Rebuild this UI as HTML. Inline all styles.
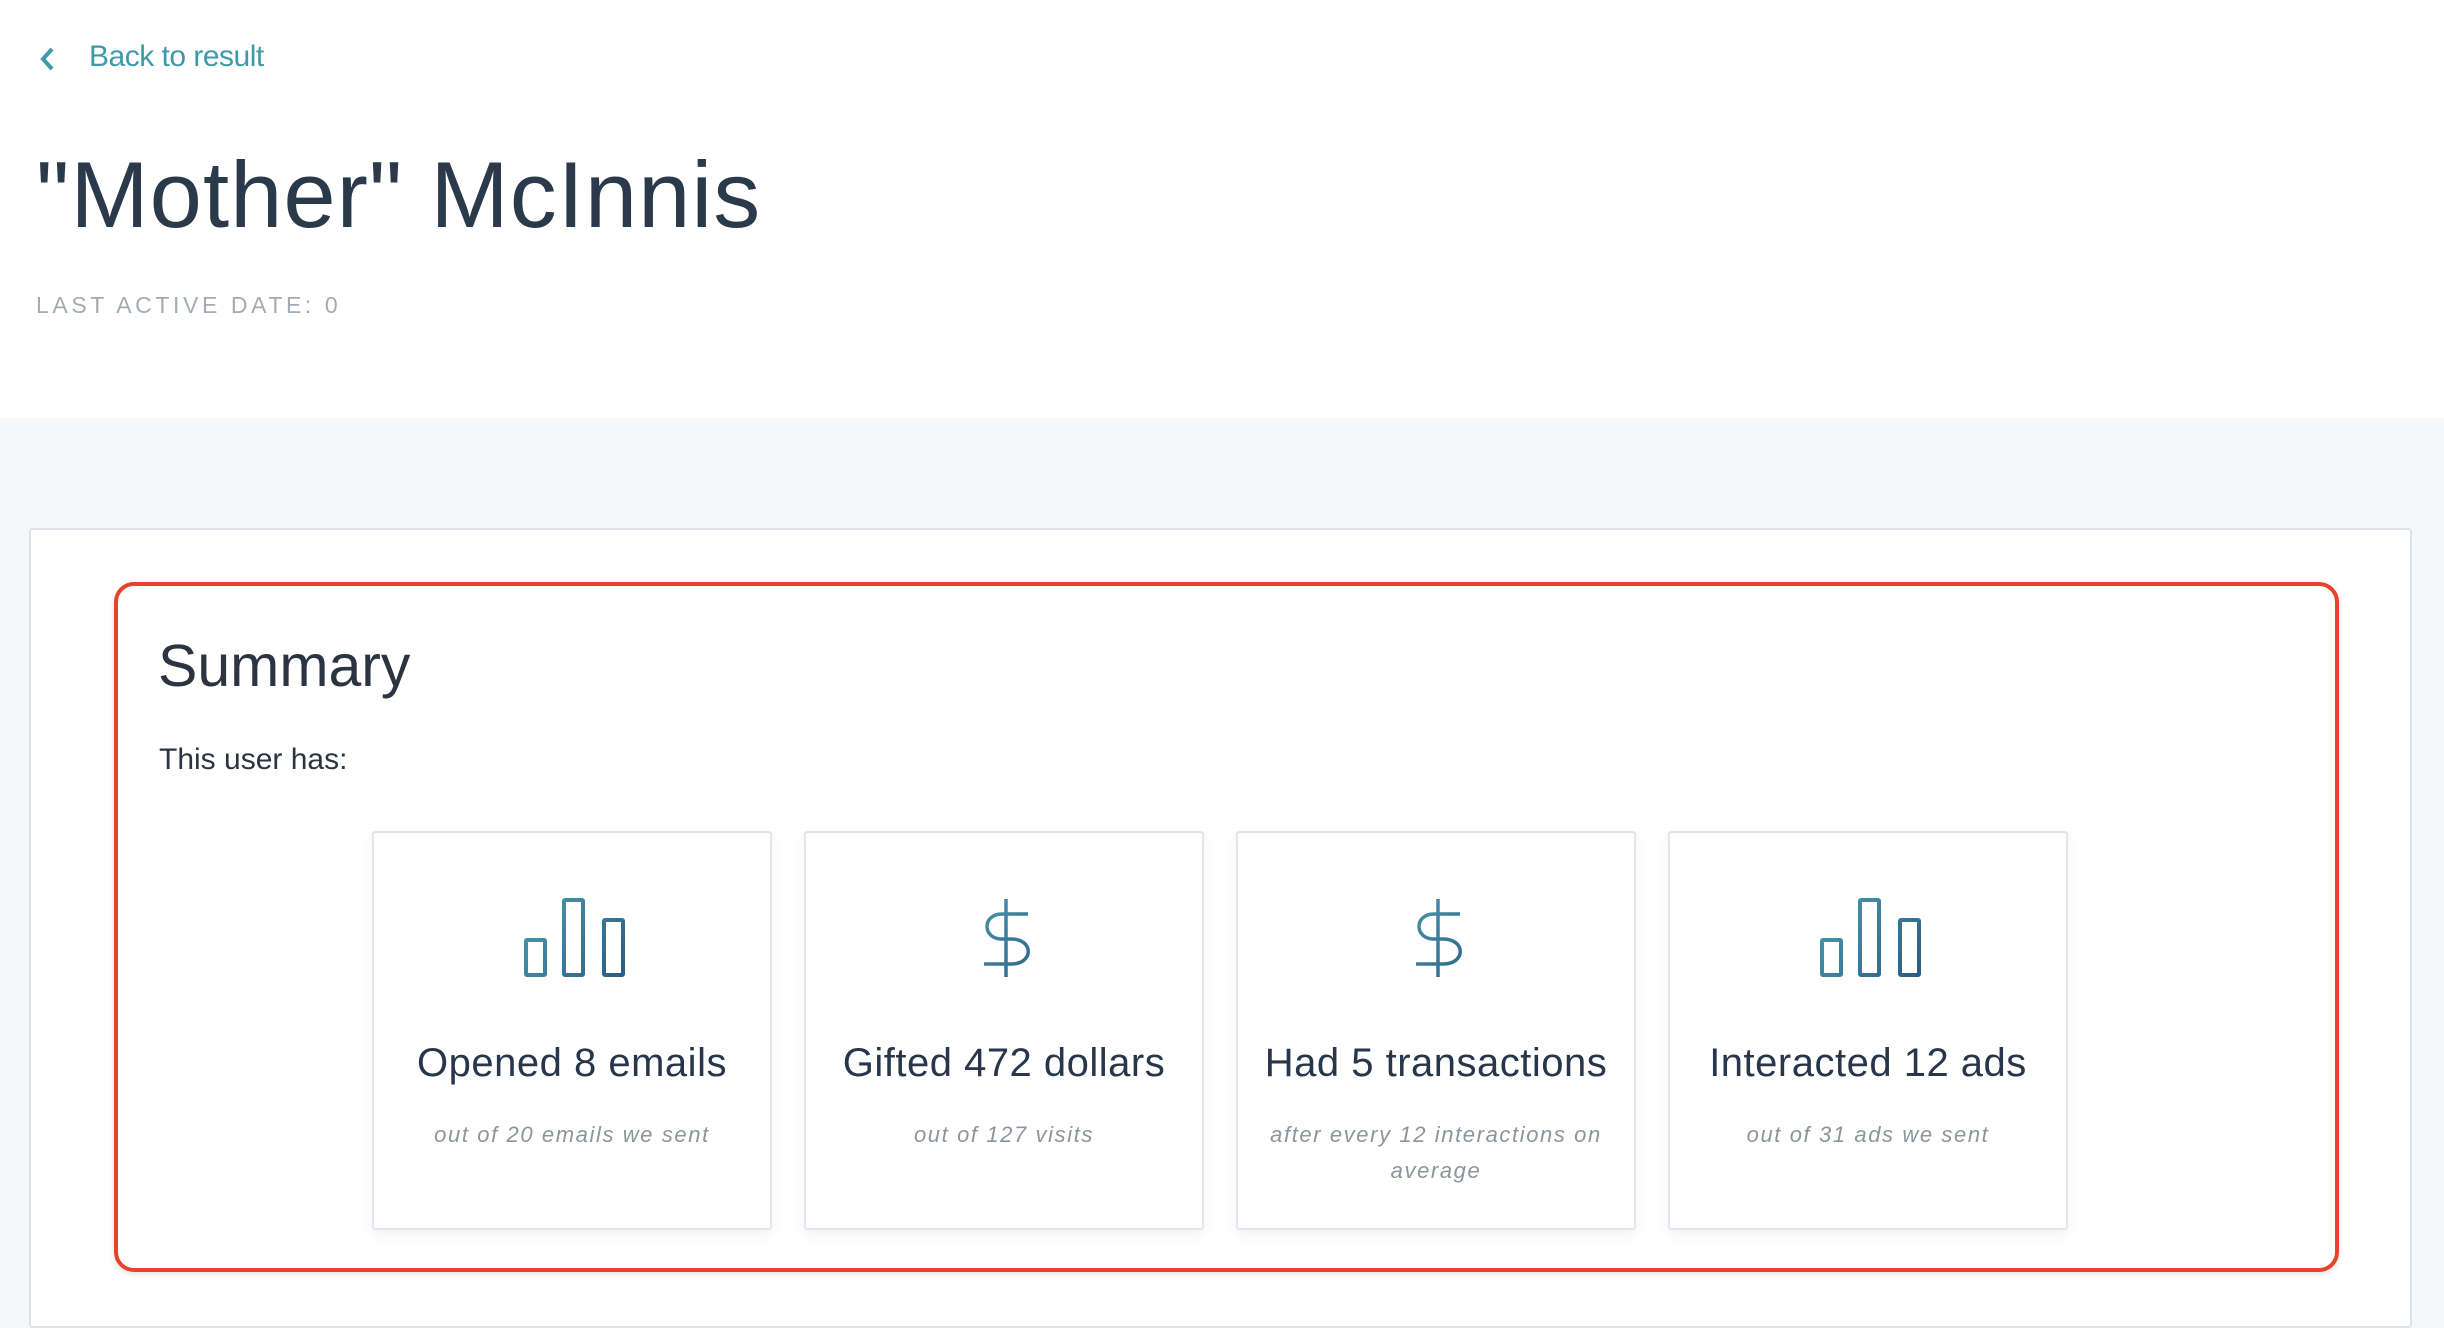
<!DOCTYPE html>
<html><head><meta charset="utf-8"><style>
*{margin:0;padding:0;box-sizing:border-box}
html,body{width:2444px;height:1298px;overflow:hidden;background:#f6f7f9;font-family:"Liberation Sans",sans-serif}
.head{position:absolute;left:0;top:0;width:2444px;height:418px;background:#fff}
.back{position:absolute;left:89px;top:40px;font-size:30px;color:#3f9aa8;letter-spacing:-0.5px}
.chev{position:absolute;left:38px;top:46px}
.title{position:absolute;left:36px;top:148px;font-size:94px;color:#2b3a4b;line-height:1;letter-spacing:1px}
.date{position:absolute;left:36px;top:292px;font-size:23px;color:#a3abb6;letter-spacing:3.6px}
.card{position:absolute;left:29px;top:528px;width:2383px;height:800px;background:#fff;border:2px solid #dde2e8;border-radius:4px}
.red{position:absolute;left:114px;top:582px;width:2225px;height:690px;border:4px solid #e6432c;border-radius:20px;box-shadow:0 2px 6px rgba(0,0,0,.12)}
.sum{position:absolute;left:158px;top:637px;font-size:59px;color:#2b3440;font-weight:300;line-height:1}
.has{position:absolute;left:159px;top:745px;font-size:30px;color:#2b3440;line-height:1}
.tile{position:absolute;top:831px;width:400px;height:399px;background:#fff;border:2px solid #e2e6ec;border-radius:3px;box-shadow:0 6px 14px rgba(0,0,0,.05);text-align:center}
.tile svg{position:absolute;left:0;top:0}
.tile h3{position:absolute;left:0;right:0;font-weight:400;font-size:40px;color:#27364a;top:210px;line-height:1;letter-spacing:0.5px}
.tile p{position:absolute;left:30px;right:30px;top:284px;font-style:italic;font-size:22px;color:#8e949b;line-height:36px;letter-spacing:1.6px}
</style></head><body>
<div class="head">
<svg class="chev" width="20" height="26" viewBox="0 0 20 26"><path d="M14 3 L5 13 L14 23" fill="none" stroke="#3f9aa8" stroke-width="4"/></svg>
<div class="back">Back to result</div>
<div class="title">"Mother" McInnis</div>
<div class="date">LAST ACTIVE DATE: 0</div>
</div>
<div class="card"></div>
<div class="red"></div>
<div class="sum">Summary</div>
<div class="has">This user has:</div>
<svg width="0" height="0" style="position:absolute"><defs><linearGradient id="g" gradientUnits="userSpaceOnUse" x1="150" y1="66" x2="250" y2="144"><stop offset="0" stop-color="#4d9eb0"/><stop offset="1" stop-color="#2a5c84"/></linearGradient></defs></svg>

<div class="tile" style="left:372px">
<svg width="400" height="200"><g fill="none" stroke="url(#g)" stroke-width="4"><rect x="152" y="107" width="19" height="35" rx="1"/><rect x="190" y="67" width="19" height="75" rx="1"/><rect x="230" y="87" width="19" height="55" rx="1"/></g></svg>
<h3>Opened 8 emails</h3><p>out of 20 emails we sent</p></div>

<div class="tile" style="left:804px">
<svg width="400" height="200"><g fill="none" stroke="url(#g)" stroke-width="3.5"><path d="M200 66 V144"/><path d="M222 81 H196 C176 81 176 106 196 106 H205 C228 106 228 131 205 131 H178"/></g></svg>
<h3>Gifted 472 dollars</h3><p>out of 127 visits</p></div>

<div class="tile" style="left:1236px">
<svg width="400" height="200"><g fill="none" stroke="url(#g)" stroke-width="3.5"><path d="M200 66 V144"/><path d="M222 81 H196 C176 81 176 106 196 106 H205 C228 106 228 131 205 131 H178"/></g></svg>
<h3>Had 5 transactions</h3><p>after every 12 interactions on average</p></div>

<div class="tile" style="left:1668px">
<svg width="400" height="200"><g fill="none" stroke="url(#g)" stroke-width="4"><rect x="152" y="107" width="19" height="35" rx="1"/><rect x="190" y="67" width="19" height="75" rx="1"/><rect x="230" y="87" width="19" height="55" rx="1"/></g></svg>
<h3>Interacted 12 ads</h3><p>out of 31 ads we sent</p></div>
</body></html>
